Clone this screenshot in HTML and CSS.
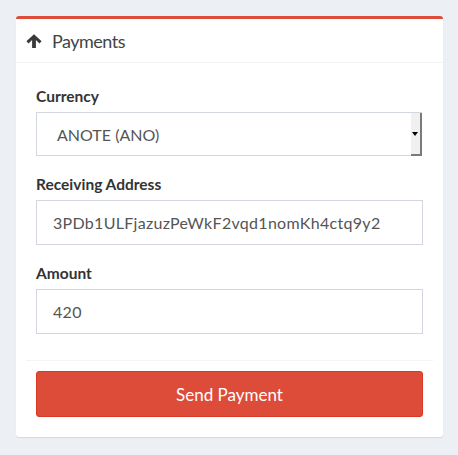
FILE: index.html
```html
<!DOCTYPE html>
<html>
<head>
<meta charset="utf-8">
<link rel="stylesheet" href="styles.css">
</head>
<body>
<div class="box">
  <div class="box-header">
    <svg class="icon" viewBox="0 0 16 14" width="16" height="14"><path fill="#3a3a3a" d="M8 0.2L15.6 7.3L13.5 9.4L9.9 5.9V14H6.1V5.9L2.5 9.4L0.4 7.3Z"/></svg>
    <h3 class="box-title">Payments</h3>
  </div>
  <div class="box-body">
    <div class="form-group">
      <label class="label">Currency</label>
      <div class="select">
        <span class="select-value">ANOTE (ANO)</span>
        <span class="select-btn"><span class="caret"></span></span>
      </div>
    </div>
    <div class="form-group">
      <label class="label">Receiving Address</label>
      <div class="input">3PDb1ULFjazuzPeWkF2vqd1nomKh4ctq9y2</div>
    </div>
    <div class="form-group">
      <label class="label">Amount</label>
      <div class="input">420</div>
    </div>
  </div>
  <div class="box-footer">
    <button class="btn">Send Payment</button>
  </div>
</div>
</body>
</html>
```
FILE: styles.css
```css
* { box-sizing: border-box; }
html, body { margin: 0; padding: 0; }
body {
  background: #ecf0f5;
  font-family: "Lato", "Open Sans", sans-serif;
  color: #333;
  padding: 16px 15px 18px 16px;
}
.box {
  width: 427px;
  background: #fff;
  border-top: 3px solid #dd4b39;
  border-radius: 3px;
  box-shadow: 0 1px 1px rgba(0,0,0,0.1);
}
.box-header {
  display: flex;
  align-items: center;
  gap: 10px;
  height: 44px;
  padding: 0 10px 0 10px;
  border-bottom: 1px solid #f4f4f4;
}
.icon { display: block; margin-top: 0; }
.box-title {
  margin: 0;
  font-size: 18px;
  font-weight: 400;
  color: #444;
  letter-spacing: -0.5px;
}
.box-body {
  padding: 23px 20px 26px 20px;
  display: flex;
  flex-direction: column;
  gap: 18px;
}
.form-group { display: flex; flex-direction: column; }
.label {
  font-weight: 700;
  font-size: 15.5px;
  color: #333;
  height: 20px;
  line-height: 20px;
  margin: 0 0 6px;
}
.select {
  display: flex;
  height: 44px;
  border: 1px solid #d2d6de;
  border-right: none;
  align-items: stretch;
  margin-right: 1px;
}
.select-value {
  flex: 1;
  display: flex;
  align-items: center;
  padding-left: 20px;
  font-size: 16px;
  color: #555;
}
.select-btn {
  width: 11px;
  background: #f0f0f0;
  border-right: 2px solid #7a7a7a;
  border-bottom: 2px solid #7a7a7a;
  margin-bottom: -1px;
  display: flex;
  align-items: center;
  justify-content: center;
}
.caret {
  width: 0; height: 0;
  border-left: 3px solid transparent;
  border-right: 3px solid transparent;
  border-top: 4px solid #000;
  margin-left: -1px;
}
.input {
  height: 45px;
  border: 1px solid #d2d6de;
  display: flex;
  align-items: center;
  padding-left: 16px;
  font-size: 16px;
  letter-spacing: 0.3px;
  color: #555;
}
.box-footer {
  margin: 0 10px;
  border-top: 1px solid #f4f4f4;
  padding: 10px 10px 20px;
}
.btn {
  display: block;
  width: 100%;
  height: 46px;
  background: #dd4b39;
  border: 1px solid #d73925;
  border-radius: 3px;
  color: #fff;
  font-family: inherit;
  font-size: 17px;
  padding: 0;
}
```
